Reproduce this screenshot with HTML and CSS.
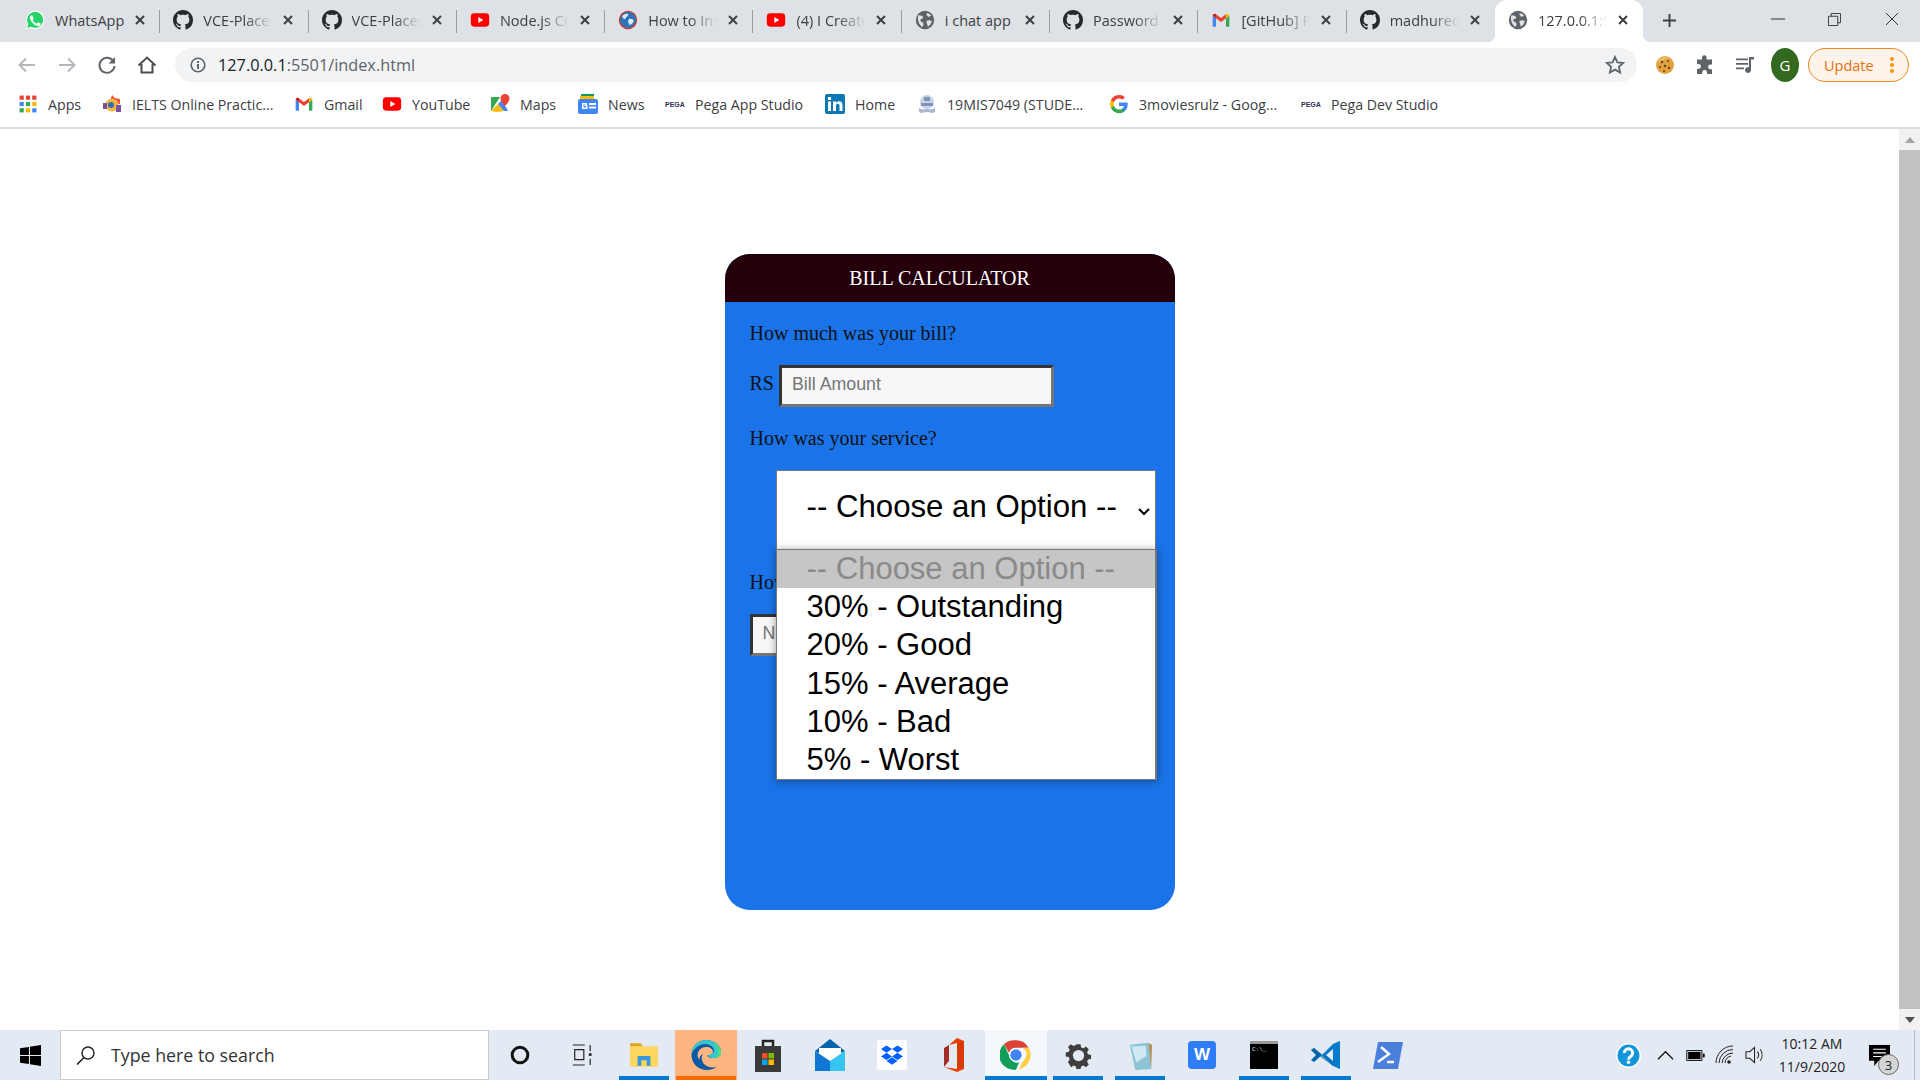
FILE: index.html
```html
<!DOCTYPE html>
<html lang="en">
<head>
<meta charset="utf-8">
<title>Bill Calculator</title>
<link rel="stylesheet" href="styles.css">
</head>
<body>
<svg class="defs" width="0" height="0" aria-hidden="true">
  <symbol id="gh" viewBox="0 0 16 16"><path fill="#24292e" d="M8 0C3.58 0 0 3.58 0 8c0 3.54 2.29 6.53 5.47 7.59.4.07.55-.17.55-.41 0-.22-.01-.82-.01-1.49-2.01.37-2.53-.49-2.69-.94-.09-.23-.48-.94-.82-1.13-.28-.15-.68-.52-.01-.53.63-.01 1.08.58 1.23.82.72 1.21 1.87.87 2.33.66.07-.52.28-.87.51-1.07-1.78-.2-3.64-.89-3.64-3.95 0-.87.31-1.59.82-2.15-.08-.2-.36-1.02.08-2.12 0 0 .67-.21 2.2.82.64-.18 1.32-.27 2-.27.68 0 1.36.09 2 .27 1.53-1.04 2.2-.82 2.2-.82.44 1.1.16 1.92.08 2.12.51.56.82 1.27.82 2.15 0 3.07-1.87 3.75-3.65 3.95.29.25.54.73.54 1.48 0 1.07-.01 1.93-.01 2.2 0 .21.15.46.55.38A8.013 8.013 0 0016 8c0-4.42-3.58-8-8-8z"/></symbol>
  <symbol id="yt" viewBox="0 0 24 24"><rect x="1" y="4" width="22" height="16" rx="4" fill="#f00"/><path fill="#fff" d="M10 8.500v7l6-3.500z"/></symbol>
  <symbol id="wa" viewBox="0 0 24 24"><path fill="#fff" d="M1 23l1.700-6A11 11 0 1 1 7 21.300z"/><path fill="#25d366" d="M2.500 21.500l1.400-4.800A9.600 9.600 0 1 1 7.300 20.100z"/><path fill="#fff" d="M9 6.800c-.3-.6-.6-.6-1-.6-.9 0-2.200 1-2.200 2.900 0 2 1.400 3.800 1.600 4.100.2.300 2.800 4.400 6.900 5.900 1.700.6 3.700.300 4.300-1.300.300-.800.300-1.500.2-1.600-.3-.3-2.500-1.400-2.900-1.400-.4 0-1 1.200-1.500 1.500-.7.100-2.100-.6-3.200-1.600-1-1-1.700-2-1.800-2.400-.1-.6 1-1.100 1-1.700 0-.4-1-2.200-1.400-3.800z"/></symbol>
  <symbol id="globe" viewBox="0 0 24 24"><circle cx="12" cy="12" r="11" fill="#5f6368"/><path fill="#dee1e6" d="M4 6c2 1 3.500.500 5 1.500s1 2.500-.5 3-2.500 1-2 2.500 3 1.500 3.500 3-.5 3-1 4.500C5 18 2.500 12 4 6zM14 4c2 0 4 1 5.500 3-1.500.500-2 1.500-3.500 1s-3-3-2-4zM14 13c2-1 4-1 6 0 0 3-2 5.500-4.500 7-.5-2.500-2.500-5-1.500-7z"/></symbol>
  <symbol id="globeblue" viewBox="0 0 24 24"><circle cx="12" cy="12" r="11" fill="#c7382f"/><circle cx="12" cy="12" r="9.500" fill="#2a76b8"/><path fill="#dfe8f0" d="M5 7c3-2 5-3 7-2 1 2-2 3-3 5s-3 1-4-3zM13 11c2-1 5 0 6 2-1 3-3 5-5 5-1-2-3-5-1-7z"/></symbol>
  <symbol id="gm" viewBox="0 0 24 24"><path fill="#4285f4" d="M2 20h4v-10L2 7z"/><path fill="#34a853" d="M18 20h4V7l-4 3z"/><path fill="#ea4335" d="M6 10V5l6 4.500L18 5v5l-6 4.500z"/><path fill="#c5221f" d="M2 7c0-2.500 2.500-3.200 4-2v5z"/><path fill="#fbbc04" d="M22 7c0-2.500-2.500-3.200-4-2v5z"/></symbol>
  <symbol id="x" viewBox="0 0 12 12"><path stroke="#3c4043" stroke-width="2" d="M2 2l8 8M10 2l-8 8"/></symbol>
  <symbol id="chromeicon" viewBox="0 0 48 48"><path fill="#db4437" d="M24 2a22 22 0 0 1 19 11H24a11 11 0 0 0-10.500 7.500L6 8a22 22 0 0 1 18-6z"/><path fill="#ffcd40" d="M43 13a22 22 0 0 1-15 32.600L37 30a11 11 0 0 0-3-17z"/><path fill="#0f9d58" d="M6 8l9.500 21a11 11 0 0 0 13 6L24 46A22 22 0 0 1 6 8z"/><circle cx="24" cy="24" r="10.500" fill="#fff"/><circle cx="24" cy="24" r="8.500" fill="#4285f4"/></symbol>
</svg>

<header class="tabstrip">
  <div class="tab"><svg class="fav"><use href="#wa"/></svg><span class="title plain">WhatsApp</span><svg class="close"><use href="#x"/></svg></div>
  <div class="tab"><svg class="fav"><use href="#gh"/></svg><span class="title">VCE-Placement</span><svg class="close"><use href="#x"/></svg></div>
  <div class="tab"><svg class="fav"><use href="#gh"/></svg><span class="title">VCE-Placement</span><svg class="close"><use href="#x"/></svg></div>
  <div class="tab"><svg class="fav"><use href="#yt"/></svg><span class="title">Node.js Crash</span><svg class="close"><use href="#x"/></svg></div>
  <div class="tab"><svg class="fav"><use href="#globeblue"/></svg><span class="title">How to Install</span><svg class="close"><use href="#x"/></svg></div>
  <div class="tab"><svg class="fav"><use href="#yt"/></svg><span class="title">(4) I Created</span><svg class="close"><use href="#x"/></svg></div>
  <div class="tab"><svg class="fav"><use href="#globe"/></svg><span class="title plain">i chat app</span><svg class="close"><use href="#x"/></svg></div>
  <div class="tab"><svg class="fav"><use href="#gh"/></svg><span class="title">Password strength</span><svg class="close"><use href="#x"/></svg></div>
  <div class="tab"><svg class="fav"><use href="#gm"/></svg><span class="title">[GitHub] Please</span><svg class="close"><use href="#x"/></svg></div>
  <div class="tab nosep"><svg class="fav"><use href="#gh"/></svg><span class="title">madhured</span><svg class="close"><use href="#x"/></svg></div>
  <div class="tab active"><svg class="fav"><use href="#globe"/></svg><span class="title">127.0.0.1:5501</span><svg class="close"><use href="#x"/></svg></div>
  <svg class="newtab" viewBox="0 0 16 16"><path stroke="#3c4043" stroke-width="2" d="M8 1v14M1 8h14"/></svg>
  <div class="winctl">
    <span class="wbtn"><svg viewBox="0 0 14 14" width="14" height="14"><path stroke="#333" d="M0 7h14"/></svg></span>
    <span class="wbtn"><svg viewBox="0 0 14 14" width="13" height="13"><path fill="none" stroke="#333" d="M.5 3.500h10v10H.5zM3.500 3.500v-3h10v10h-3"/></svg></span>
    <span class="wbtn"><svg viewBox="0 0 14 14" width="14" height="14"><path stroke="#333" d="M1 1l12 12M13 1L1 13"/></svg></span>
  </div>
</header>

<nav class="toolbar">
  <span class="tbtn"><svg viewBox="0 0 20 20" width="20" height="20"><path fill="none" stroke="#b4b7bb" stroke-width="2" d="M18 10H3M9 3.500L2.500 10 9 16.500"/></svg></span>
  <span class="tbtn"><svg viewBox="0 0 20 20" width="20" height="20"><path fill="none" stroke="#b4b7bb" stroke-width="2" d="M2 10h15M11 3.500l6.500 6.500-6.500 6.500"/></svg></span>
  <span class="tbtn"><svg viewBox="0 0 20 20" width="20" height="20"><path fill="none" stroke="#5f6368" stroke-width="2" d="M16.500 6.500A7.500 7.500 0 1 0 17.500 11"/><path fill="#5f6368" d="M18 2v6.500h-6.500z"/></svg></span>
  <span class="tbtn"><svg viewBox="0 0 20 20" width="20" height="20"><path fill="none" stroke="#4a4d51" stroke-width="2" d="M1.500 10.500L10 2.500l8.500 8M4.500 9v8.500h11V9"/></svg></span>
  <div class="omnibox">
    <svg class="info" viewBox="0 0 16 16" width="16" height="16"><circle cx="8" cy="8" r="6.800" fill="none" stroke="#5f6368" stroke-width="1.600"/><path fill="#5f6368" d="M7 7h2v5H7zM7 4h2v2H7z"/></svg>
    <span class="url"><b>127.0.0.1</b>:5501/index.html</span>
    <svg class="star" viewBox="0 0 20 20" width="20" height="20"><path fill="none" stroke="#5f6368" stroke-width="1.800" d="M10 2l2.400 5.300 5.800.6-4.300 3.900 1.200 5.700L10 14.600l-5.100 2.900 1.200-5.700L1.800 7.900l5.800-.6z"/></svg>
  </div>
  <span class="tbtn"><svg viewBox="0 0 20 20" width="20" height="20"><circle cx="10" cy="10" r="9" fill="#e0a23e"/><path fill="#f0c26b" d="M3 8a8 8 0 0 1 12-5c-4 0-8 2-12 5z"/><g fill="#6b3f12"><circle cx="7" cy="7" r="1.200"/><circle cx="13" cy="6" r="1"/><circle cx="10" cy="11" r="1.200"/><circle cx="5" cy="12" r="1"/><circle cx="14" cy="13" r="1.200"/><circle cx="9" cy="16" r="1"/></g></svg></span>
  <span class="tbtn"><svg viewBox="0 0 20 20" width="20" height="20"><path fill="#5f6368" d="M7 2.500a2.300 2.300 0 0 1 4.600 0V4.500H17v5h-1.500a2.400 2.400 0 0 0 0 4.800H17V19H12v-1.500a2.400 2.400 0 0 0-4.800 0V19H2v-5.200h1.500a2.400 2.400 0 0 0 0-4.800H2v-4.500h5z"/></svg></span>
  <span class="tbtn"><svg viewBox="0 0 20 20" width="20" height="20"><path fill="#5f6368" d="M1 3.500h12v1.800H1zM1 8h12v1.800H1zM1 12.500h8v1.800H1zM14 2h5v2.500h-3V15a3 3 0 1 1-2-2.800z"/></svg></span>
  <span class="tbtn"><span class="avatar">G</span></span>
  <span class="update"><span>Update</span><svg viewBox="0 0 4 16" width="4" height="16"><g fill="#f29900"><circle cx="2" cy="2" r="2"/><circle cx="2" cy="8" r="2"/><circle cx="2" cy="14" r="2"/></g></svg></span>
</nav>

<nav class="bookmarks">
  <span class="bm"><svg class="bi" viewBox="-1.500 -1.500 19 19"><g><rect x="0" y="0" width="4" height="4" fill="#ea4335"/><rect x="6" y="0" width="4" height="4" fill="#ea4335"/><rect x="12" y="0" width="4" height="4" fill="#ea4335"/><rect x="0" y="6" width="4" height="4" fill="#4285f4"/><rect x="6" y="6" width="4" height="4" fill="#34a853"/><rect x="12" y="6" width="4" height="4" fill="#fbbc04"/><rect x="0" y="12" width="4" height="4" fill="#34a853"/><rect x="6" y="12" width="4" height="4" fill="#fbbc04"/><rect x="12" y="12" width="4" height="4" fill="#4285f4"/></g></svg>Apps</span>
  <span class="bm"><svg class="bi" viewBox="0 0 20 20"><path fill="#e9573f" d="M10 1l3 3 5 1v5l-4 0-1-3-5 0z"/><circle cx="10" cy="11" r="6.500" fill="#f3b33d"/><circle cx="9" cy="11" r="3" fill="#2d6fb7"/><path fill="#7a4ea3" d="M14 11h5v7h-5zM1 9h4v6H1z"/></svg>IELTS Online Practic...</span>
  <span class="bm"><svg class="bi"><use href="#gm"/></svg>Gmail</span>
  <span class="bm"><svg class="bi"><use href="#yt"/></svg>YouTube</span>
  <span class="bm"><svg class="bi" viewBox="0 0 20 20"><path fill="#34a853" d="M1 3l9 0-9 14z"/><path fill="#fbbc04" d="M1 17l7-7 6 7-7 1z"/><path fill="#4285f4" d="M8 10l4-4 6 11-4 0z"/><path fill="#ea4335" d="M15 0a4.500 4.500 0 0 1 4.500 4.500c0 3-4.500 7.500-4.500 7.500s-4.500-4.500-4.500-7.500A4.500 4.500 0 0 1 15 0z"/></svg>Maps</span>
  <span class="bm"><svg class="bi" viewBox="0 0 20 20"><path fill="#0f9d58" d="M3 0h13v5H3z"/><path fill="#fbbc04" d="M2 2h14v5H2z"/><rect x="0" y="5" width="20" height="15" rx="2" fill="#4285f4"/><path fill="#fff" d="M11 9h7v2h-7zM11 12.500h7v2h-7zM4 9h5v1.500H5.500v3H8V12H6.500v-1.300H9.500V15H4z"/></svg>News</span>
  <span class="bm"><span class="pega">PEGA</span>Pega App Studio</span>
  <span class="bm"><svg class="bi" viewBox="0 0 20 20"><rect width="20" height="20" rx="2" fill="#0a78b5"/><path fill="#fff" d="M3 7.500h3V17H3zM3 3h3v3H3zM8 7.500h3v1.300c.6-1 1.700-1.600 3-1.600 2.500 0 3.500 1.500 3.500 4.300V17h-3v-5c0-1.300-.4-2.200-1.600-2.200S11 10.700 11 12v5H8z"/></svg>Home</span>
  <span class="bm"><svg class="bi" viewBox="0 0 20 20"><circle cx="10" cy="8" r="7" fill="#c9d3e6"/><path fill="#7f93bd" d="M4 9h12v3H4zM7 3h6v4H7z"/><path fill="#aab8d4" d="M2 14c3 2 5 1 8 1s5 1 8-1v4c-3 2-5 0-8 0s-5 2-8 0z"/></svg>19MIS7049 (STUDE...</span>
  <span class="bm"><svg class="bi" viewBox="0 0 24 24"><path fill="#4285f4" d="M22.500 12.300c0-.8-.1-1.500-.2-2.200H12v4.200h5.900a5 5 0 0 1-2.200 3.300v2.700h3.500c2.100-1.900 3.300-4.800 3.300-8z"/><path fill="#34a853" d="M12 23c3 0 5.400-1 7.200-2.700l-3.500-2.700c-1 .7-2.200 1-3.700 1-2.800 0-5.200-1.900-6.100-4.500H2.300v2.800A11 11 0 0 0 12 23z"/><path fill="#fbbc04" d="M5.900 14.100a6.600 6.600 0 0 1 0-4.200V7.100H2.300a11 11 0 0 0 0 9.800z"/><path fill="#ea4335" d="M12 5.400c1.600 0 3 .6 4.100 1.600l3.100-3.100A11 11 0 0 0 2.300 7.100l3.600 2.800C6.800 7.300 9.200 5.400 12 5.400z"/></svg>3moviesrulz - Goog...</span>
  <span class="bm"><span class="pega">PEGA</span>Pega Dev Studio</span>
</nav>

<div class="viewport">
  <main class="page">
    <section class="card">
      <h1 class="card-head">BILL CALCULATOR</h1>
      <form class="card-body">
        <p class="label">How much was your bill?</p>
        <div class="amount-row"><span class="label">RS</span><input class="field" type="text" placeholder="Bill Amount"></div>
        <p class="label">How was your service?</p>
        <div class="select-wrap">
          <div class="select"><span>-- Choose an Option --</span><svg class="chev" viewBox="0 0 12 8" width="12" height="8"><path fill="none" stroke="#000" stroke-width="2" d="M1 1l5 5 5-5"/></svg></div>
          <ul class="popup">
            <li class="opt current">-- Choose an Option --</li>
            <li class="opt">30% - Outstanding</li>
            <li class="opt">20% - Good</li>
            <li class="opt">15% - Average</li>
            <li class="opt">10% - Bad</li>
            <li class="opt">5% - Worst</li>
          </ul>
        </div>
        <p class="label">How many people?</p>
        <input class="field" type="text" placeholder="Number of People">
      </form>
    </section>
  </main>
  <aside class="scrollbar">
    <span class="sb-btn"><svg viewBox="0 0 10 6" width="10" height="6"><path fill="#a3a3a3" d="M5 0l5 6H0z"/></svg></span>
    <span class="sb-thumb"></span>
    <span class="sb-btn"><svg viewBox="0 0 10 6" width="10" height="6"><path fill="#505050" d="M0 0h10L5 6z"/></svg></span>
  </aside>
</div>

<footer class="taskbar">
  <span class="startbtn"><svg viewBox="0 0 20 20" width="21" height="21"><path fill="#000" d="M0 3l8.500-1.200V9.500H0zM9.500 1.600L20 0v9.500H9.500zM0 10.500h8.500v7.700L0 17zM9.500 10.500H20V20L9.500 18.400z"/></svg></span>
  <div class="search"><svg viewBox="0 0 20 20" width="20" height="20"><circle cx="12" cy="8" r="6" fill="none" stroke="#222" stroke-width="1.400"/><path stroke="#222" stroke-width="1.600" d="M8 12.500L1 19.500"/></svg><span>Type here to search</span></div>
  <span class="sysbtn cortana"><svg viewBox="0 0 20 20" width="20" height="20"><circle cx="10" cy="10" r="7.800" fill="none" stroke="#111" stroke-width="3"/></svg></span>
  <span class="sysbtn taskview"><svg viewBox="0 0 22 24" width="20" height="22"><path fill="none" stroke="#222" stroke-width="1.300" d="M1 1h13M1 23h13M3 6h10v11H3zM20 1v7M20 16v7"/><rect x="18.500" y="10" width="3" height="3" fill="#222"/></svg></span>
  <span class="app on"><svg viewBox="0 0 28 28" width="30" height="30"><path fill="#e0a419" d="M1 3h10l2 3H1z"/><path fill="#ffd65c" d="M1 6h26v19H1z"/><path fill="#3a96dd" d="M8 24v-9h12v9h-3.500v-5h-5v5z"/></svg></span>
  <span class="app hot"><svg viewBox="0 0 32 32" width="32" height="32"><path fill="#0c59a4" d="M16 1C8 1 1.500 7.500 1.500 16S8 31 17 31c4 0 7-1 9.500-3-4 1-9 .5-12-2.500S11 18 13 15c-3 1-4 4-3.500 6C5 16 9 8 16 8c4 0 7 2 7 5 0 2-2 3-4 3h-2c0 2 3 3 6 3 4 0 8-2 8-6C31 6 24 1 16 1z"/><path fill="#37c6d0" d="M16 1C8 1 1.500 7.500 1.500 16 3 10 9 5 15 5c5 0 9 3 9 7 0 2-3 4-7 4 1 2 4 3 6 3 4 0 8-2 8-6C31 6 24 1 16 1z"/><path fill="#4fd97f" d="M22 3c5 2 9 6 9 10 0 4-3 6-6 6 2-1 3-3 3-6 0-4-3-8-6-10z"/></svg></span>
  <span class="app"><svg viewBox="0 0 28 34" width="28" height="34"><path fill="none" stroke="#222" stroke-width="2.500" d="M9 10V3h10v7"/><path fill="#3a3a3a" d="M1 8h26v26H1z"/><rect x="8" y="15" width="5.500" height="5.500" fill="#f25022"/><rect x="14.500" y="15" width="5.500" height="5.500" fill="#7fba00"/><rect x="8" y="21.500" width="5.500" height="5.500" fill="#00a4ef"/><rect x="14.500" y="21.500" width="5.500" height="5.500" fill="#ffb900"/></svg></span>
  <span class="app"><svg viewBox="0 0 32 32" width="32" height="32"><path fill="#0a64ad" d="M16 0L1 12l15 8 15-8z"/><path fill="#fff" d="M5 9h22v9l-11 6-11-6z"/><path fill="#0f78d4" d="M1 12l15 10v10H1z"/><path fill="#36c5f0" d="M31 12L16 22v10h15z"/></svg></span>
  <span class="app"><span class="dropbox"><svg viewBox="0 0 24 22" width="22" height="21"><path fill="#0061ff" d="M6 0l6 4-6 4-6-4zM18 0l6 4-6 4-6-4zM0 12l6-4 6 4-6 4zM12 12l6-4 6 4-6 4zM6 17l6-4 6 4-6 4z"/></svg></span></span>
  <span class="app"><svg viewBox="0 0 24 34" width="24" height="34"><path fill="#eb3c00" d="M15 0l7 3v28l-7 3-13-5 13 2V5L7 7z"/><path fill="#a52c2c" d="M2 10l5-3v16l-5 6z"/><path fill="#d83b01" d="M15 5v26l7-2V3z"/></svg></span>
  <span class="app pinned"><svg width="32" height="32"><use href="#chromeicon"/></svg></span>
  <span class="app"><svg viewBox="0 0 24 24" width="27" height="27"><path fill="#3f3f3f" d="M10 1h4l.6 3 2.200.9 2.600-1.700 2.800 2.800-1.700 2.600.9 2.200 3 .6v4l-3 .6-.9 2.200 1.700 2.600-2.800 2.800-2.600-1.700-2.200.9-.6 3h-4l-.6-3-2.200-.9-2.600 1.700L1.600 18.400l1.700-2.600-.9-2.200-3-.6V9l3-.6.9-2.200L1.600 3.600 4.400.8 7 2.500l2.400-.9z" transform="translate(1.200 1.200) scale(.9)"/><circle cx="12" cy="12" r="5" fill="#e4eaf3"/></svg></span>
  <span class="app"><svg viewBox="0 0 30 32" width="28" height="30"><path fill="#b5925a" d="M23 3l5 2-1 26-4-1z"/><path fill="#8cc4d6" d="M4 5l20-2 3 28-17 1z"/><path fill="#cfe9f2" d="M6 7l15-1 1 11-11 7z"/></svg></span>
  <span class="app"><span class="wps">W</span></span>
  <span class="app"><span class="term">C:\_</span></span>
  <span class="app"><svg viewBox="0 0 32 32" width="32" height="32"><path fill="#0065a9" d="M1 11l3-2 8 7-8 7-3-2 5-5z"/><path fill="#007acc" d="M12 16l11-11 7-3v28l-7-3z"/><path fill="#e4eaf3" d="M23 10v12l-7-6z"/><path fill="#0065a9" d="M4 9l19 15v3L1 11z" opacity=".6"/></svg></span>
  <span class="app"><svg viewBox="0 0 32 32" width="32" height="32"><path fill="#4a7fdc" d="M6 3h25l-5 27H1z"/><path fill="none" stroke="#fff" stroke-width="2.500" d="M9 8l8 7-11 8M15 23h7"/></svg></span>
  <div class="tray">
    <span class="ti"><svg viewBox="0 0 24 24" width="25" height="25"><circle cx="12" cy="12" r="12" fill="#fff"/><circle cx="12" cy="12" r="10.500" fill="#1296db"/><path fill="none" stroke="#fff" stroke-width="2.800" d="M8 9.500a4 4 0 1 1 6 3.500c-1.500 1-2 1.500-2 3"/><circle cx="12" cy="18.500" r="1.700" fill="#fff"/></svg></span>
    <span class="ti"><svg viewBox="0 0 18 10" width="17" height="10"><path fill="none" stroke="#111" stroke-width="1.300" d="M1 9.500l8-8 8 8"/></svg></span>
    <span class="ti"><svg viewBox="0 0 20 12" width="19" height="11"><path fill="none" stroke="#000" d="M.5.500h16.500v11H.5z"/><rect x="2" y="2" width="13.500" height="8"/><rect x="18" y="4" width="2" height="4"/></svg></span>
    <span class="ti"><svg viewBox="0 0 20 20" width="20" height="20"><g fill="none" stroke="#222" stroke-width="1"><path d="M1 18A17 17 0 0 1 18 1"/><path d="M4 18A14 14 0 0 1 18 4.500"/><path d="M7 18A11 11 0 0 1 18 8"/><path d="M10 18a8 8 0 0 1 6-7"/></g><circle cx="14" cy="17" r="1.800" fill="#222"/></svg></span>
    <span class="ti"><svg viewBox="0 0 22 20" width="21" height="20"><path fill="none" stroke="#222" stroke-width="1.100" d="M1 6.500h4L10 2v16l-5-4.500H1zM13 6.500c1.500 2 1.500 5 0 7M16 4c2.500 3.500 2.500 8.500 0 12"/></svg></span>
    <div class="clock"><span>10:12 AM</span><span>11/9/2020</span></div>
    <span class="ti notif"><svg viewBox="0 0 20 20" width="21" height="21"><path fill="#000" d="M0 0h20v15H9l-4 5v-5H0z"/><path stroke="#fff" d="M4 4h12M4 7.500h12M4 11h8"/></svg><span class="badge">3</span></span>
  </div>
</footer>
</body>
</html>
```

FILE: styles.css
```css
* { box-sizing: border-box; }
html, body { margin: 0; height: 100%; }
body {
  display: flex;
  flex-direction: column;
  height: 100vh;
  overflow: hidden;
  background: #fff;
  font-family: "Open Sans", "Noto Sans", sans-serif;
  color: #3c4043;
}
.defs { position: absolute; }

/* tab strip */
.tabstrip {
  display: flex;
  flex: 0 0 42px;
  padding-left: 12px;
  background: #dee1e6;
  align-items: stretch;
}
.tab {
  position: relative;
  flex: 0 0 148.3px;
  display: flex;
  align-items: center;
  padding: 0 0 2px 13px;
  font-size: 14.5px;
}
.tab::after {
  content: "";
  position: absolute;
  right: 0;
  top: 10px;
  height: 23px;
  width: 1px;
  background: #9a9da1;
}
.tab.nosep::after { display: none; }
.tab.active {
  background: #fff;
  border-radius: 12px 12px 0 0;
}
.tab.active::before {
  content: "";
  position: absolute;
  left: -8px;
  bottom: 0;
  width: 8px;
  height: 8px;
  background: radial-gradient(circle at 0 0, #dee1e6 8px, #fff 8.5px);
}
.tab.active::after {
  top: auto;
  bottom: 0;
  right: -8px;
  width: 8px;
  height: 8px;
  background: radial-gradient(circle at 100% 0, #dee1e6 8px, #fff 8.5px);
}
.fav { flex: 0 0 20px; width: 20px; height: 20px; }
.title {
  flex: 0 0 69px;
  margin-left: 10px;
  overflow: hidden;
  white-space: nowrap;
  -webkit-mask-image: linear-gradient(90deg, #000 60%, transparent 100%);
  mask-image: linear-gradient(90deg, #000 60%, transparent 100%);
}
.title.plain { -webkit-mask-image: none; mask-image: none; }
.close { flex: 0 0 12px; width: 12px; height: 12px; margin-left: 10px; }
.newtab { width: 15px; height: 15px; margin: 13px 0 0 19px; }
.winctl { display: flex; margin-left: auto; }
.wbtn { width: 57px; height: 42px; display: flex; align-items: center; justify-content: center; padding-bottom: 4px; }

/* toolbar */
.toolbar {
  display: flex;
  flex: 0 0 44px;
  align-items: center;
  padding: 2px 11px 0 7px;
  background: #fff;
}
.tbtn { flex: 0 0 40px; height: 34px; display: flex; align-items: center; justify-content: center; }
.omnibox {
  flex: 1;
  height: 34px;
  margin: 0 8px;
  padding: 0 12px 0 15px;
  display: flex;
  align-items: center;
  border-radius: 17px;
  background: #f1f3f4;
}
.url { margin-left: 12px; font-size: 16.3px; color: #5f6368; white-space: nowrap; }
.url b { font-weight: 400; color: #202124; }
.star { margin-left: auto; }
.avatar {
  width: 28px;
  height: 34px;
  border-radius: 50%;
  background: #33691e;
  color: #fff;
  font-size: 15px;
  display: flex;
  align-items: center;
  justify-content: center;
}
.update {
  flex: 0 0 101px;
  height: 34px;
  margin-left: 3px;
  padding: 0 14px 0 15px;
  display: flex;
  align-items: center;
  justify-content: space-between;
  border: 1px solid #ee8a1f;
  border-radius: 17px;
  background: #fdf3ea;
  color: #e8710a;
  font-size: 14.5px;
}

/* bookmarks */
.bookmarks {
  flex: 0 0 43px;
  display: grid;
  grid-template-columns: 84px 192px 88px 108px 88px 87px 160px 92px 192px 192px auto;
  align-items: center;
  padding: 0 0 5px 18px;
  border-bottom: 2px solid #dadce0;
  font-size: 14.2px;
  color: #3c4043;
  background: #fff;
}
.bm { display: flex; align-items: center; gap: 10px; white-space: nowrap; }
.bi { flex: 0 0 20px; width: 20px; height: 20px; }
.pega {
  flex: 0 0 20px;
  width: 20px;
  font: 700 7px "Liberation Sans", sans-serif;
  color: #2d2f52;
}

/* viewport and page */
.viewport { flex: 1; min-height: 0; display: flex; }
.page { flex: 1; min-width: 0; padding-top: 125px; }
.scrollbar { flex: 0 0 21px; display: flex; flex-direction: column; background: #f1f1f1; }
.sb-btn { flex: 0 0 21px; display: flex; align-items: center; justify-content: center; }
.sb-thumb { flex: 1; background: #c1c1c1; }

.card {
  width: 450px;
  height: 656px;
  margin: 0 auto;
  background: #1a73e8;
  border-radius: 25px;
  font-family: "Liberation Serif", serif;
  color: #111;
}
.card-head {
  height: 48px;
  margin: 0;
  padding-right: 20px;
  display: flex;
  align-items: center;
  justify-content: center;
  border-radius: 25px 25px 0 0;
  background: #25000b;
  color: #fff;
  font-size: 20px;
  font-weight: 400;
}
.card-body {
  display: flex;
  flex-direction: column;
  align-items: flex-start;
  gap: 20px;
  padding: 20px 25px 0;
}
.label { margin: 0; font-size: 20px; line-height: 23px; }
.amount-row { display: flex; align-items: flex-start; gap: 5px; }
.amount-row .label { line-height: 36px; }
.field {
  width: 275px;
  height: 42px;
  padding: 0 0 4px 10px;
  border: 3px solid;
  border-color: #333 #767676 #767676 #333;
  background: #f7f7f7;
  font: 17.8px "Liberation Sans", sans-serif;
  outline: none;
}
.field::placeholder { color: #757575; opacity: 1; }

.select-wrap { position: relative; margin: 0 0 1px 26px; }
.select {
  width: 380px;
  height: 80px;
  padding: 0 5px 6px 30px;
  display: flex;
  align-items: center;
  justify-content: space-between;
  border: 1px solid #767676;
  background: #fff;
  color: #000;
  font: 31.2px "Liberation Sans", sans-serif;
  white-space: nowrap;
}
.chev { margin-top: 9px; }
.popup {
  position: absolute;
  left: 0;
  top: 79px;
  width: 381px;
  margin: 0;
  padding: 0;
  list-style: none;
  border: 1px solid #767676;
  border-width: 1px 2px 1px 1px;
  background: #fff;
  box-shadow: 0 1px 8px rgba(0, 0, 0, .4);
  font: 31px/38.2px "Liberation Sans", sans-serif;
  color: #000;
}
.opt { height: 38.2px; padding-left: 30px; white-space: nowrap; }
.opt.current { background: #c6c6c6; color: #8a8a8a; }

/* taskbar */
.taskbar {
  flex: 0 0 50px;
  display: flex;
  align-items: stretch;
  background: #e4eaf3;
  color: #222;
}
.startbtn { flex: 0 0 60px; display: flex; align-items: center; justify-content: center; }
.search {
  flex: 0 0 429px;
  display: flex;
  align-items: center;
  gap: 15px;
  padding-left: 15px;
  background: #fff;
  border: 1px solid #ccc;
  font-size: 17.8px;
  color: #333;
}
.sysbtn { display: flex; align-items: center; justify-content: center; flex: 0 0 62px; }
.app {
  position: relative;
  flex: 0 0 62px;
  display: flex;
  align-items: center;
  justify-content: center;
}
.app.on::after, .app.pinned::after,
.app:nth-child(n+12):nth-child(-n+13)::after,
.app:nth-child(n+15):nth-child(-n+16)::after {
  content: "";
  position: absolute;
  left: 6px;
  right: 6px;
  bottom: 0;
  height: 4px;
  background: #0078d4;
}
.app.hot { background: #ffb580; }
.app.hot::after {
  content: "";
  position: absolute;
  left: 1px;
  right: 1px;
  bottom: 0;
  height: 4px;
  background: #f76b00;
}
.app.pinned { background: #f3f6fa; }
.app.pinned::after { left: 0; right: 0; }
.dropbox {
  width: 30px;
  height: 30px;
  display: flex;
  align-items: center;
  justify-content: center;
  background: #fff;
  border-radius: 3px;
}
.wps {
  width: 28px;
  height: 28px;
  display: flex;
  align-items: center;
  justify-content: center;
  border-radius: 4px;
  background: #2e7cf6;
  color: #fff;
  font: 700 17px "Liberation Sans", sans-serif;
}
.term {
  width: 28px;
  height: 28px;
  padding: 2px;
  background: #000;
  border-top: 3px solid #999;
  color: #ddd;
  font: 6px/8px "Liberation Mono", monospace;
}
.tray {
  margin-left: auto;
  margin-right: 5px;
  padding-right: 14px;
  display: grid;
  grid-template-columns: 36px 38px 22px 38px 22px 92px 42px;
  align-items: center;
  border-right: 1px solid #b5bcc8;
}
.ti { position: relative; display: flex; align-items: center; justify-content: center; height: 50px; }
.clock {
  display: flex;
  flex-direction: column;
  align-items: center;
  gap: 4px;
  font-size: 14px;
  line-height: 19px;
  color: #222;
  white-space: nowrap;
}
.badge {
  position: absolute;
  left: 20px;
  top: 24px;
  width: 21px;
  height: 21px;
  display: flex;
  align-items: center;
  justify-content: center;
  border: 1px solid #666;
  border-radius: 50%;
  background: #d4d4d4;
  font-size: 13px;
  color: #222;
}
```
